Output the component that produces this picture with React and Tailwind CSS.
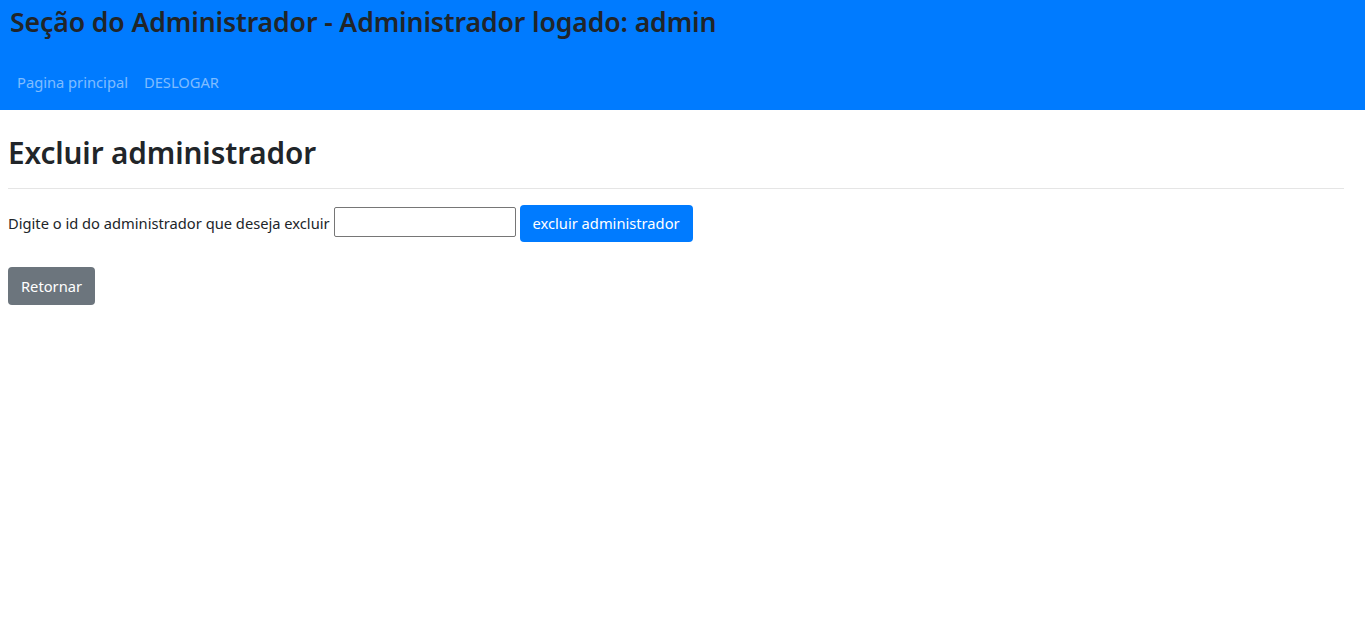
export default function App() {
  return (
    <div className="min-h-screen bg-white text-[#212529]" style={{ fontFamily: '"Segoe UI", "Noto Sans", sans-serif' }}>
      {/* Header */}
      <div className="bg-[#007bff] h-[110px] px-[10px] pt-[5px]">
        <h3 className="text-[26.6px] font-semibold leading-[34px] tracking-[-0.1px]">
          Seção do Administrador - Administrador logado: admin
        </h3>
        <nav className="flex mt-[23px] -ml-[1px]">
          <a href="#" className="px-[8px] h-[40px] flex items-center text-[14.7px] text-white/50">
            Pagina principal
          </a>
          <a href="#" className="px-[8px] h-[40px] flex items-center text-[14.7px] text-white/50">
            DESLOGAR
          </a>
        </nav>
      </div>

      {/* Content */}
      <div className="px-[8px]">
        <h2 className="mt-[24px] text-[29.7px] font-semibold leading-[38px] tracking-[-0.1px]">Excluir administrador</h2>
        <hr className="mt-[16px] mb-[16px] border-t border-[#e5e5e5] mr-[13px]" />
        <form className="flex items-start gap-[4px]">
          <label className="text-[14.7px] leading-[37px]">Digite o id do administrador que deseja excluir</label>
          <input type="text" className="mt-[2px] w-[182px] h-[30px] border border-[#767676] rounded-[2px]" />
          <button type="button" className="h-[37px] w-[173px] rounded-[4px] bg-[#007bff] text-white text-[14.7px]">
            excluir administrador
          </button>
        </form>
        <button type="button" className="mt-[25px] h-[38px] w-[87px] rounded-[4px] bg-[#6c757d] text-white text-[14.7px]">
          Retornar
        </button>
      </div>
    </div>
  )
}
